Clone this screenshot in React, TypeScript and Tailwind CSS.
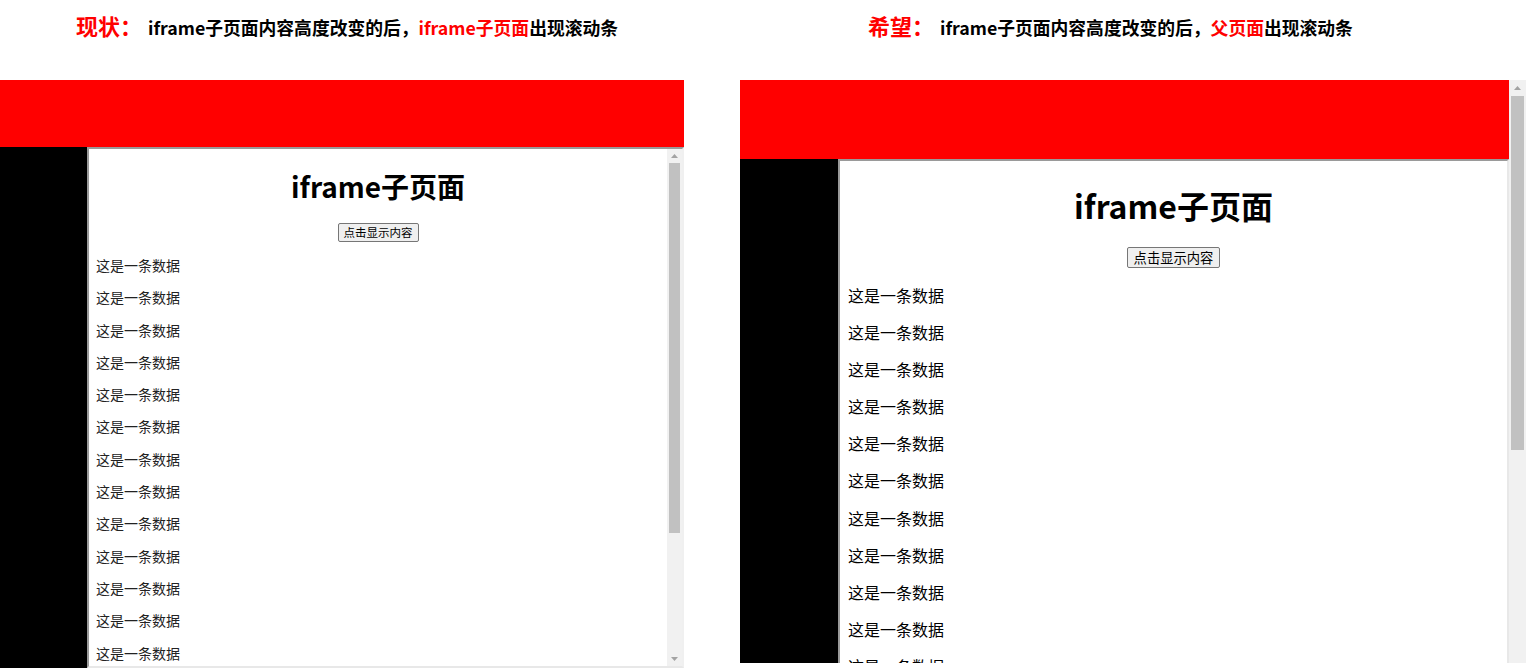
import React from "react";

const rows = Array.from({ length: 14 });

const Arrow: React.FC<{ up?: boolean }> = ({ up }) => (
  <svg width="7" height="4" viewBox="0 0 7 4">
    <path d={up ? "M0 4L3.5 0L7 4Z" : "M0 0L3.5 4L7 0Z"} fill="#a3a3a3" />
  </svg>
);

const Heading: React.FC<{ label: string; highlight: string; pad: string }> = ({
  label,
  highlight,
  pad,
}) => (
  <div className={`h-[80px] flex items-baseline pt-[10px] leading-[30px] font-bold ${pad}`}>
    <span className="text-[22px] text-[#ff0000]">{label}</span>
    <span className="ml-[6px] text-[17.8px] text-black">
      iframe子页面内容高度改变的后，
      <span className="text-[#ff0000]">{highlight}</span>
      出现滚动条
    </span>
  </div>
);

const App: React.FC = () => {
  return (
    <div className="w-[1528px] h-[671px] overflow-hidden bg-white flex gap-[56px] font-['Noto_Sans_CJK_SC',sans-serif]">
      {/* 现状 */}
      <div className="w-[684px] flex flex-col">
        <Heading label="现状：" highlight="iframe子页面" pad="pl-[76px]" />
        <div className="h-[588px] flex flex-col">
          <div className="h-[67px] bg-[#ff0000]" />
          <div className="flex-1 flex min-h-0">
            <div className="w-[87px] bg-black" />
            <div className="flex-1 flex min-h-0 border-2 border-t-[#9a9a9a] border-l-[#9a9a9a] border-r-[#f0f0f0] border-b-[#e8e8e8]">
              <div className="flex-1 overflow-hidden flex flex-col">
                <h1 className="mt-[20px] text-center text-[28px] leading-[35px] font-bold text-black">
                  iframe子页面
                </h1>
                <div className="mt-[19px] flex justify-center">
                  <button className="h-[19px] px-[5px] text-[11.5px] leading-[15px] text-black bg-[#efefef] border border-[#767676] rounded-[2px]">
                    点击显示内容
                  </button>
                </div>
                <div className="mt-[14px] pl-[7px]">
                  {rows.map((_, i) => (
                    <p key={i} className="text-[14px] leading-[18px] mb-[14.3px] text-[#222]">
                      这是一条数据
                    </p>
                  ))}
                </div>
              </div>
              <div className="w-[15px] bg-[#f1f1f1] flex flex-col">
                <div className="h-[14px] flex items-center justify-center">
                  <Arrow up />
                </div>
                <div className="h-[370px] mx-[2px] bg-[#c1c1c1]" />
                <div className="flex-1" />
                <div className="h-[14px] flex items-center justify-center">
                  <Arrow />
                </div>
              </div>
            </div>
          </div>
        </div>
      </div>

      {/* 希望 */}
      <div className="w-[786px] flex flex-col">
        <Heading label="希望：" highlight="父页面" pad="pl-[128px]" />
        <div className="h-[583px] flex">
          <div className="flex-1 flex flex-col min-w-0">
            <div className="h-[79px] bg-[#ff0000]" />
            <div className="flex-1 flex min-h-0">
              <div className="w-[98px] bg-black" />
              <div className="flex-1 overflow-hidden flex flex-col border-l-2 border-t-2 border-r-2 border-t-[#9a9a9a] border-l-[#9a9a9a] border-r-[#e8e8e8]">
                <h1 className="mt-[24px] text-center text-[32px] leading-[40px] font-bold text-black">
                  iframe子页面
                </h1>
                <div className="mt-[22px] flex justify-center">
                  <button className="h-[21px] px-[6px] text-[13.3px] leading-[17px] text-black bg-[#efefef] border border-[#767676] rounded-[2px]">
                    点击显示内容
                  </button>
                </div>
                <div className="mt-[17px] pl-[8px]">
                  {rows.map((_, i) => (
                    <p key={i} className="text-[16px] leading-[21px] mb-[16.1px] text-black">
                      这是一条数据
                    </p>
                  ))}
                </div>
              </div>
            </div>
          </div>
          <div className="w-[17px] bg-[#f1f1f1] flex flex-col">
            <div className="h-[16px] flex items-center justify-center">
              <Arrow up />
            </div>
            <div className="h-[354px] mx-[2px] bg-[#c1c1c1]" />
          </div>
        </div>
      </div>
    </div>
  );
};

export default App;
